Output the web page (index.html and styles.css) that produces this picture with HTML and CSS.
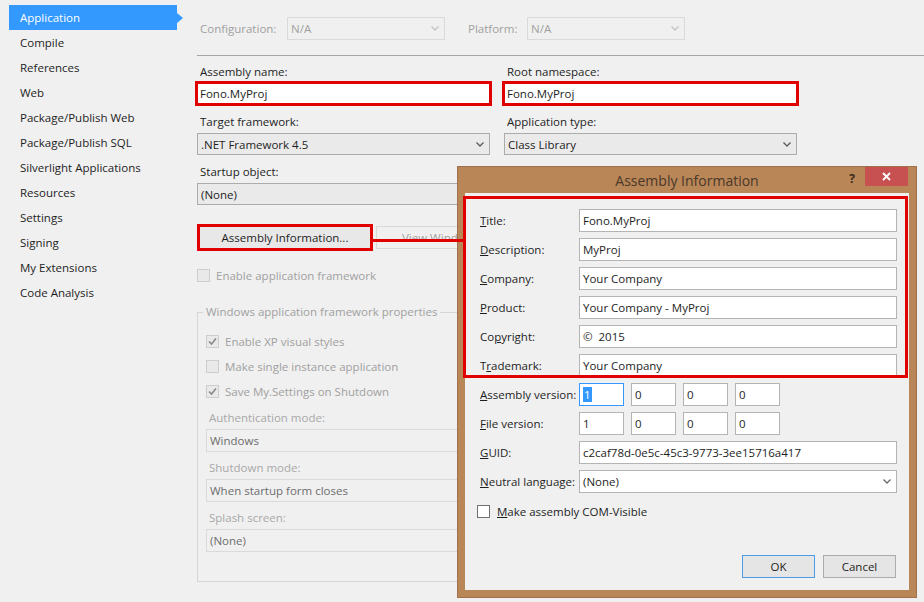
FILE: index.html
```html
<!DOCTYPE html>
<html>
<head>
<meta charset="utf-8">
<title>Application</title>
<link rel="stylesheet" href="styles.css">
</head>
<body>
<div class="page">
  <nav class="sidebar">
    <div class="nav-item active">Application</div>
    <div class="nav-item">Compile</div>
    <div class="nav-item">References</div>
    <div class="nav-item">Web</div>
    <div class="nav-item">Package/Publish Web</div>
    <div class="nav-item">Package/Publish SQL</div>
    <div class="nav-item">Silverlight Applications</div>
    <div class="nav-item">Resources</div>
    <div class="nav-item">Settings</div>
    <div class="nav-item">Signing</div>
    <div class="nav-item">My Extensions</div>
    <div class="nav-item">Code Analysis</div>
  </nav>

  <main class="content">
    <div class="toolbar">
      <span class="tb-label config">Configuration:</span>
      <div class="select off w158"><span>N/A</span><svg class="chev" width="8" height="5" viewBox="0 0 8 5"><path d="M0.5 0.5 L4 4 L7.5 0.5" fill="none" stroke="#c4c4c4" stroke-width="1.3"/></svg></div>
      <span class="tb-label platform">Platform:</span>
      <div class="select off w158"><span>N/A</span><svg class="chev" width="8" height="5" viewBox="0 0 8 5"><path d="M0.5 0.5 L4 4 L7.5 0.5" fill="none" stroke="#c4c4c4" stroke-width="1.3"/></svg></div>
    </div>
    <div class="sep"></div>

    <div class="fields">
      <div class="field">
        <div class="field-label">Assembly name:</div>
        <div class="textbox marked">Fono.MyProj</div>
      </div>
      <div class="field">
        <div class="field-label">Root namespace:</div>
        <div class="textbox marked">Fono.MyProj</div>
      </div>
      <div class="field">
        <div class="field-label">Target framework:</div>
        <div class="select combo"><span>.NET Framework 4.5</span><svg class="chev" width="8" height="5" viewBox="0 0 8 5"><path d="M0.5 0.5 L4 4 L7.5 0.5" fill="none" stroke="#5a5a5a" stroke-width="1.3"/></svg></div>
      </div>
      <div class="field">
        <div class="field-label">Application type:</div>
        <div class="select combo"><span>Class Library</span><svg class="chev" width="8" height="5" viewBox="0 0 8 5"><path d="M0.5 0.5 L4 4 L7.5 0.5" fill="none" stroke="#5a5a5a" stroke-width="1.3"/></svg></div>
      </div>
      <div class="field">
        <div class="field-label">Startup object:</div>
        <div class="select combo"><span>(None)</span><svg class="chev" width="8" height="5" viewBox="0 0 8 5"><path d="M0.5 0.5 L4 4 L7.5 0.5" fill="none" stroke="#5a5a5a" stroke-width="1.3"/></svg></div>
      </div>
      <div class="field"></div>
    </div>

    <div class="btn-row">
      <div class="mark-box"><div class="button inner">Assembly Information...</div></div>
      <div class="button off"><span class="clip">View Windows Settings</span></div>
    </div>

    <div class="check-row off"><span class="cb off"></span><span>Enable application framework</span></div>

    <fieldset class="group">
      <legend>Windows application framework properties</legend>
      <div class="group-inner">
        <div class="g-check"><span class="cb off"><svg width="11" height="11" viewBox="0 0 11 11"><path d="M2 5.5 L4.5 8 L9 2.5" fill="none" stroke="#8a8a8a" stroke-width="1.6"/></svg></span><span>Enable XP visual styles</span></div>
        <div class="g-check"><span class="cb off"></span><span>Make single instance application</span></div>
        <div class="g-check"><span class="cb off"><svg width="11" height="11" viewBox="0 0 11 11"><path d="M2 5.5 L4.5 8 L9 2.5" fill="none" stroke="#8a8a8a" stroke-width="1.6"/></svg></span><span>Save My.Settings on Shutdown</span></div>
        <div class="g-field">
          <div class="g-label">Authentication mode:</div>
          <div class="g-select">Windows</div>
        </div>
        <div class="g-field">
          <div class="g-label">Shutdown mode:</div>
          <div class="g-select">When startup form closes</div>
        </div>
        <div class="g-field">
          <div class="g-label">Splash screen:</div>
          <div class="g-select">(None)</div>
        </div>
      </div>
    </fieldset>
  </main>
</div>

<div class="connector"></div>

<div class="dialog">
  <div class="titlebar">
    <span class="title">Assembly Information</span>
    <span class="help">?</span>
    <span class="close"><svg width="9" height="9" viewBox="0 0 9 9"><path d="M1 1 L8 8 M8 1 L1 8" stroke="#fff" stroke-width="1.8"/></svg></span>
  </div>
  <div class="client">
    <div class="mark-overlay"></div>
    <div class="form">
      <label class="d-label"><u>T</u>itle:</label>
      <div class="d-input">Fono.MyProj</div>
      <label class="d-label"><u>D</u>escription:</label>
      <div class="d-input">MyProj</div>
      <label class="d-label"><u>C</u>ompany:</label>
      <div class="d-input">Your Company</div>
      <label class="d-label"><u>P</u>roduct:</label>
      <div class="d-input">Your Company - MyProj</div>
      <label class="d-label">Co<u>p</u>yright:</label>
      <div class="d-input">©&nbsp; 2015</div>
      <label class="d-label">T<u>r</u>ademark:</label>
      <div class="d-input">Your Company</div>
      <label class="d-label"><u>A</u>ssembly version:</label>
      <div class="versions">
        <div class="d-input v focus"><span class="sel">1</span></div>
        <div class="d-input v">0</div>
        <div class="d-input v">0</div>
        <div class="d-input v">0</div>
      </div>
      <label class="d-label"><u>F</u>ile version:</label>
      <div class="versions">
        <div class="d-input v">1</div>
        <div class="d-input v">0</div>
        <div class="d-input v">0</div>
        <div class="d-input v">0</div>
      </div>
      <label class="d-label"><u>G</u>UID:</label>
      <div class="d-input">c2caf78d-0e5c-45c3-9773-3ee15716a417</div>
      <label class="d-label"><u>N</u>eutral language:</label>
      <div class="d-input d-combo"><span>(None)</span><svg class="chev" width="8" height="5" viewBox="0 0 8 5"><path d="M0.5 0.5 L4 4 L7.5 0.5" fill="none" stroke="#6a6a6a" stroke-width="1.3"/></svg></div>
    </div>
    <div class="com-row"><span class="cb on"></span><span><u>M</u>ake assembly COM-Visible</span></div>
    <div class="footer">
      <div class="d-btn default">OK</div>
      <div class="d-btn">Cancel</div>
    </div>
  </div>
</div>
</body>
</html>
```
FILE: styles.css
```css
* { box-sizing: border-box; }
html, body { margin: 0; padding: 0; }
body {
  width: 924px;
  height: 602px;
  overflow: hidden;
  position: relative;
  background: #f0f0f0;
  font-family: "Open Sans", "Noto Sans", sans-serif;
  font-size: 11.5px;
  color: #1e1e1e;
}

.page { display: flex; }

/* sidebar */
.sidebar { width: 197px; flex: none; padding-top: 5px; }
.nav-item {
  position: relative;
  margin-left: 9px;
  width: 168px;
  height: 25px;
  line-height: 25px;
  padding-left: 11px;
  white-space: nowrap;
}
.nav-item.active { background: #3399ff; color: #fff; }
.nav-item.active::after {
  content: "";
  position: absolute;
  left: 100%;
  top: 8px;
  border-left: 6px solid #3399ff;
  border-top: 5px solid transparent;
  border-bottom: 5px solid transparent;
}

/* content */
.content { flex: 1; min-width: 0; }
.toolbar { margin-top: 17px; height: 23px; display: flex; align-items: center; }
.tb-label { color: #a0a0a0; white-space: nowrap; }
.tb-label.config { width: 90px; padding-left: 3px; }
.tb-label.platform { width: 59px; margin-left: 23px; }
.w158 { width: 158px; }

.select {
  height: 22px;
  border: 1px solid #acacac;
  background: #eaeaea;
  display: flex;
  align-items: center;
  justify-content: space-between;
  padding: 0 5px 0 3px;
  white-space: nowrap;
}
.select.off { height: 23px; border-color: #dadada; background: #f0f0f0; color: #a0a0a0; }
.select.combo { margin-top: 2px; }
.chev { flex: none; }

.sep { margin-top: 15px; height: 1px; background: #a5a5a5; }

.fields {
  display: grid;
  grid-template-columns: 293px 293px;
  column-gap: 14px;
  margin-top: 7px;
}
.field { height: 50px; }
.field-label { height: 18px; line-height: 18px; padding-left: 3px; }
.textbox.marked {
  margin-left: -2px;
  width: 297px;
  height: 25px;
  border: 3px solid #e00000;
  background: #fff;
  padding-left: 2px;
  line-height: 19px;
}

.btn-row { display: flex; align-items: center; gap: 3px; margin-top: 11px; height: 27px; }
.mark-box { width: 176px; height: 27px; border: 3px solid #e00000; }
.button {
  display: flex;
  align-items: center;
  justify-content: center;
  border: 1px solid #acacac;
  background: #e6e6e6;
  white-space: nowrap;
}
.button.inner { height: 100%; border: none; background: #e8e8e8; }
.button.off {
  width: 85px;
  height: 23px;
  border-color: #d9d9d9;
  border-right: none;
  background: #f0f0f0;
  color: #a0a0a0;
  flex: none;
  justify-content: flex-start;
  padding-left: 25px;
  overflow: hidden;
}
.clip { display: block; width: 55px; overflow: hidden; white-space: nowrap; }

.check-row { margin-top: 15px; height: 18px; display: flex; align-items: center; gap: 6px; }
.off { color: #a0a0a0; }
.cb {
  width: 13px;
  height: 13px;
  flex: none;
  display: flex;
  align-items: center;
  justify-content: center;
}
.cb.off { border: 1px solid #cdcdcd; background: #e9e9e9; }
.cb.on { border: 1px solid #707070; background: #fff; }

.group {
  margin: 19px 0 0 0;
  padding: 0 0 27px 5px;
  border: 1px solid #d5d5d5;
  width: 300px;
  min-width: 0;
}
.group legend { padding: 0 3px; line-height: 18px; color: #a0a0a0; white-space: nowrap; }
.group-inner { padding: 8px 0 0 3px; }
.g-check { height: 25px; display: flex; align-items: center; gap: 6px; color: #a0a0a0; white-space: nowrap; }
.g-field { padding-top: 5px; height: 50px; }
.g-label { height: 18px; line-height: 18px; padding-left: 3px; color: #a8a8a8; }
.g-select {
  margin-top: 2px;
  height: 23px;
  line-height: 21px;
  border: 1px solid #dadada;
  background: #f0f0f0;
  color: #6d6d6d;
  padding-left: 3px;
  white-space: nowrap;
}

/* annotation line */
.connector {
  position: absolute;
  left: 373px;
  top: 239px;
  width: 91px;
  height: 3px;
  background: #e00000;
  z-index: 3;
}

/* dialog */
.dialog {
  position: absolute;
  left: 457px;
  top: 166px;
  width: 460px;
  height: 432px;
  background: #b98658;
  border: 1px solid #a0714b;
  display: flex;
  flex-direction: column;
  z-index: 2;
}
.titlebar {
  position: relative;
  height: 26px;
  flex: none;
  display: flex;
  align-items: center;
  justify-content: center;
}
.title { font-size: 14px; color: #4a3829; }
.help {
  position: absolute;
  right: 61px;
  top: 3px;
  font-size: 12px;
  font-weight: bold;
  color: #3b2a1c;
}
.close {
  position: absolute;
  right: 8px;
  top: 0;
  width: 43px;
  height: 19px;
  background: #c75050;
  display: flex;
  align-items: center;
  justify-content: center;
}

.client {
  position: relative;
  flex: 1;
  margin: 0 7px 7px 7px;
  background: #f0f0f0;
  display: flex;
  flex-direction: column;
  padding: 16px 12px 12px 15px;
}
.mark-overlay {
  position: absolute;
  left: -2px;
  top: 3px;
  width: 445px;
  height: 182px;
  border: 3px solid #e00000;
  z-index: 2;
  pointer-events: none;
}
.form {
  display: grid;
  grid-template-columns: 99px 318px;
  grid-auto-rows: 23px;
  row-gap: 6px;
  align-items: center;
}
.d-label { white-space: nowrap; }
.d-input {
  height: 23px;
  line-height: 21px;
  border: 1px solid #b4b4b4;
  background: #fff;
  padding-left: 3px;
  white-space: nowrap;
  overflow: hidden;
}
.d-combo { display: flex; align-items: center; justify-content: space-between; padding-right: 5px; }
.versions { display: flex; gap: 7px; }
.d-input.v { width: 45px; }
.d-input.focus { border-color: #3399ff; }
.sel { background: #3399ff; color: #fff; padding: 0 1px; }

.com-row {
  margin: 9px 0 0 -3px;
  height: 18px;
  display: flex;
  align-items: center;
  gap: 7px;
}
.footer { margin-top: auto; display: flex; justify-content: flex-end; gap: 8px; padding-right: 1px; }
.d-btn {
  width: 73px;
  height: 23px;
  border: 1px solid #acacac;
  background: #e5e5e5;
  display: flex;
  align-items: center;
  justify-content: center;
}
.d-btn.default { border-color: #4d9de6; }
```
